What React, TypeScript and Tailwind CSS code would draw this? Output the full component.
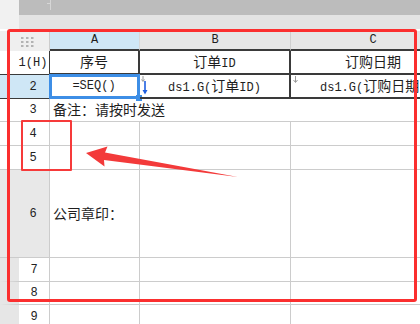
import React from 'react';

const CJK = /([\u3000-\u303f\uff00-\uffef\u4e00-\u9fff]+)/;

// Latin in a narrow mono face, Chinese runs a touch larger so they sit full-width
const Txt: React.FC<{ s: string }> = ({ s }) => (
  <span className="whitespace-nowrap">
    {s
      .split(CJK)
      .filter(Boolean)
      .map((part, i) =>
        CJK.test(part) ? (
          <span key={i} className="text-[14px] [font-family:'Noto_Sans_CJK_SC',sans-serif]">
            {part}
          </span>
        ) : (
          <span key={i}>{part}</span>
        )
      )}
  </span>
);

const grid = 'border-[#cccccc]';
const dark = 'border-[#3a3a3a]';

const RowHead: React.FC<{ n: string; tone?: 'white' | 'blue' | 'gray' | 'gutter'; darkEdge?: boolean }> = ({
  n,
  tone = 'white',
  darkEdge,
}) => {
  const bg =
    tone === 'blue'
      ? 'bg-[#cfe7f6]'
      : tone === 'gray'
      ? 'bg-[#e8e8e8]'
      : tone === 'gutter'
      ? 'bg-white border-l-[19px] border-l-[#e6e6e6]'
      : 'bg-white';
  return (
    <div
      className={`flex items-center justify-center border-b border-r ${darkEdge ? dark : grid} ${bg} ${
        tone === 'gutter' ? '' : 'pl-[17px]'
      } text-[#222]`}
    >
      {n}
    </div>
  );
};

const Cell: React.FC<{ children?: React.ReactNode; className?: string }> = ({ children, className = '' }) => (
  <div className={`flex items-center border-b border-r ${grid} ${className}`}>{children}</div>
);

export default function App() {
  return (
    <div className="relative w-[420px] h-[324px] overflow-hidden bg-white text-[12px] leading-none text-[#1e1e1e] [font-family:'Liberation_Mono','Noto_Sans_CJK_SC',monospace]">
      {/* designer toolbar strips */}
      <div className="flex h-[15px]">
        <div className="w-[19px] bg-[#f1f1f1]" />
        <div className="flex-1 bg-[#bcbcbc] flex">
          <div className="ml-[28px] mt-[3px] w-[3px] h-[1px] bg-[#d6d6d6]" />
          <div className="w-[1px] h-[10px] bg-[#d6d6d6]" />
        </div>
      </div>
      <div className="flex h-[14px]">
        <div className="w-[19px] bg-[#f1f1f1]" />
        <div className="flex-1 bg-[#e3e3e3]" />
      </div>
      <div className="h-[2px]" />

      {/* sheet */}
      <div className="grid grid-cols-[50px_90px_151px_164px] grid-rows-[20px_24px_24px_23px_24px_24px_88px_24px_23px_24px]">
        {/* column headers */}
        <div className={`flex items-center justify-center bg-[#efefef] border-r ${grid}`}>
          <svg width="13" height="10" viewBox="0 0 13 10" className="ml-[6px] mt-[2px]">
            {[0, 1, 2].map((r) =>
              [0, 1, 2].map((c) => <rect key={`${r}${c}`} x={c * 5} y={r * 4} width="2.5" height="2" fill="#b3b3b3" />)
            )}
          </svg>
        </div>
        <div className={`flex items-center justify-center bg-[#cfe7f6] border-b-2 border-r ${dark} border-r-[#d8d8d8]`}>A</div>
        <div className={`flex items-center justify-center bg-[#e6e6e6] border-b-2 border-r ${dark} border-r-[#d0d0d0]`}>B</div>
        <div className={`flex items-center justify-center bg-[#e6e6e6] border-b-2 ${dark}`}>C</div>

        {/* row 1: table header */}
        <RowHead n="1(H)" darkEdge />
        <div className={`flex items-center justify-center border-b-2 border-r-2 ${dark}`}>
          <Txt s="序号" />
        </div>
        <div className={`flex items-center justify-center border-b-2 border-r-2 ${dark}`}>
          <Txt s="订单ID" />
        </div>
        <div className={`flex items-center justify-center border-b-2 ${dark}`}>
          <Txt s="订购日期" />
        </div>

        {/* row 2: bound fields */}
        <RowHead n="2" tone="blue" darkEdge />
        <div className={`relative flex items-center justify-center border-b-2 border-r-2 ${dark}`}>
          =SEQ()
          <div className="absolute -left-[1px] -top-[1px] -right-[2px] -bottom-[2px] border-[3px] border-[#3d8ee6]" />
          <div className="absolute -right-[4px] -bottom-[4px] w-[6px] h-[6px] bg-[#3d8ee6]" />
        </div>
        <div className={`relative flex items-center justify-center border-b-2 border-r-2 ${dark}`}>
          <svg width="8" height="22" viewBox="0 0 8 22" className="absolute left-[1px] top-0">
            <path d="M2 1v5M0.5 4.5L2 6.5 3.5 4.5" stroke="#9a9a9a" strokeWidth="1" fill="none" />
            <path d="M4 6v12" stroke="#1f5fe0" strokeWidth="1.6" />
            <path d="M1.5 15L4 19.5 6.5 15z" fill="#1f5fe0" />
          </svg>
          <Txt s="ds1.G(订单ID)" />
        </div>
        <div className={`relative flex items-center border-b-2 ${dark} pl-[29px] overflow-hidden`}>
          <svg width="7" height="8" viewBox="0 0 7 8" className="absolute left-[1px] top-[1px]">
            <path d="M3.5 0v6M1.5 4L3.5 6.5 5.5 4" stroke="#9a9a9a" strokeWidth="1" fill="none" />
          </svg>
          <Txt s="ds1.G(订购日期)" />
        </div>

        {/* row 3: merged note */}
        <RowHead n="3" />
        <Cell className="col-span-3 pl-[3px] border-r-0">
          <Txt s="备注：请按时发送" />
        </Cell>

        <RowHead n="4" />
        <Cell />
        <Cell />
        <Cell className="border-r-0" />

        <RowHead n="5" />
        <Cell />
        <Cell />
        <Cell className="border-r-0" />

        {/* row 6: tall stamp row */}
        <RowHead n="6" tone="gray" />
        <Cell className="pl-[3px]">
          <Txt s="公司章印：" />
        </Cell>
        <Cell />
        <Cell className="border-r-0" />

        {['7', '8', '9'].map((n) => (
          <React.Fragment key={n}>
            <RowHead n={n} tone="gutter" />
            <Cell />
            <Cell />
            <Cell className="border-r-0" />
          </React.Fragment>
        ))}
      </div>

      {/* red annotation marks */}
      <div className="absolute left-[7px] top-[29px] w-[410px] h-[273px] border-[3px] border-[#fb2f2f] rounded-[3px]" />
      <div className="absolute left-[21px] top-[120px] w-[51px] h-[51px] border-2 border-[#f63a3a] rounded-[1px]" />
      <svg className="absolute left-0 top-0" width="420" height="324" viewBox="0 0 420 324">
        <path d="M86 153 L107.5 146.5 L105 152.5 L238 177 L104 160 L104.5 166.5 Z" fill="#f33a3a" />
      </svg>
    </div>
  );
}
